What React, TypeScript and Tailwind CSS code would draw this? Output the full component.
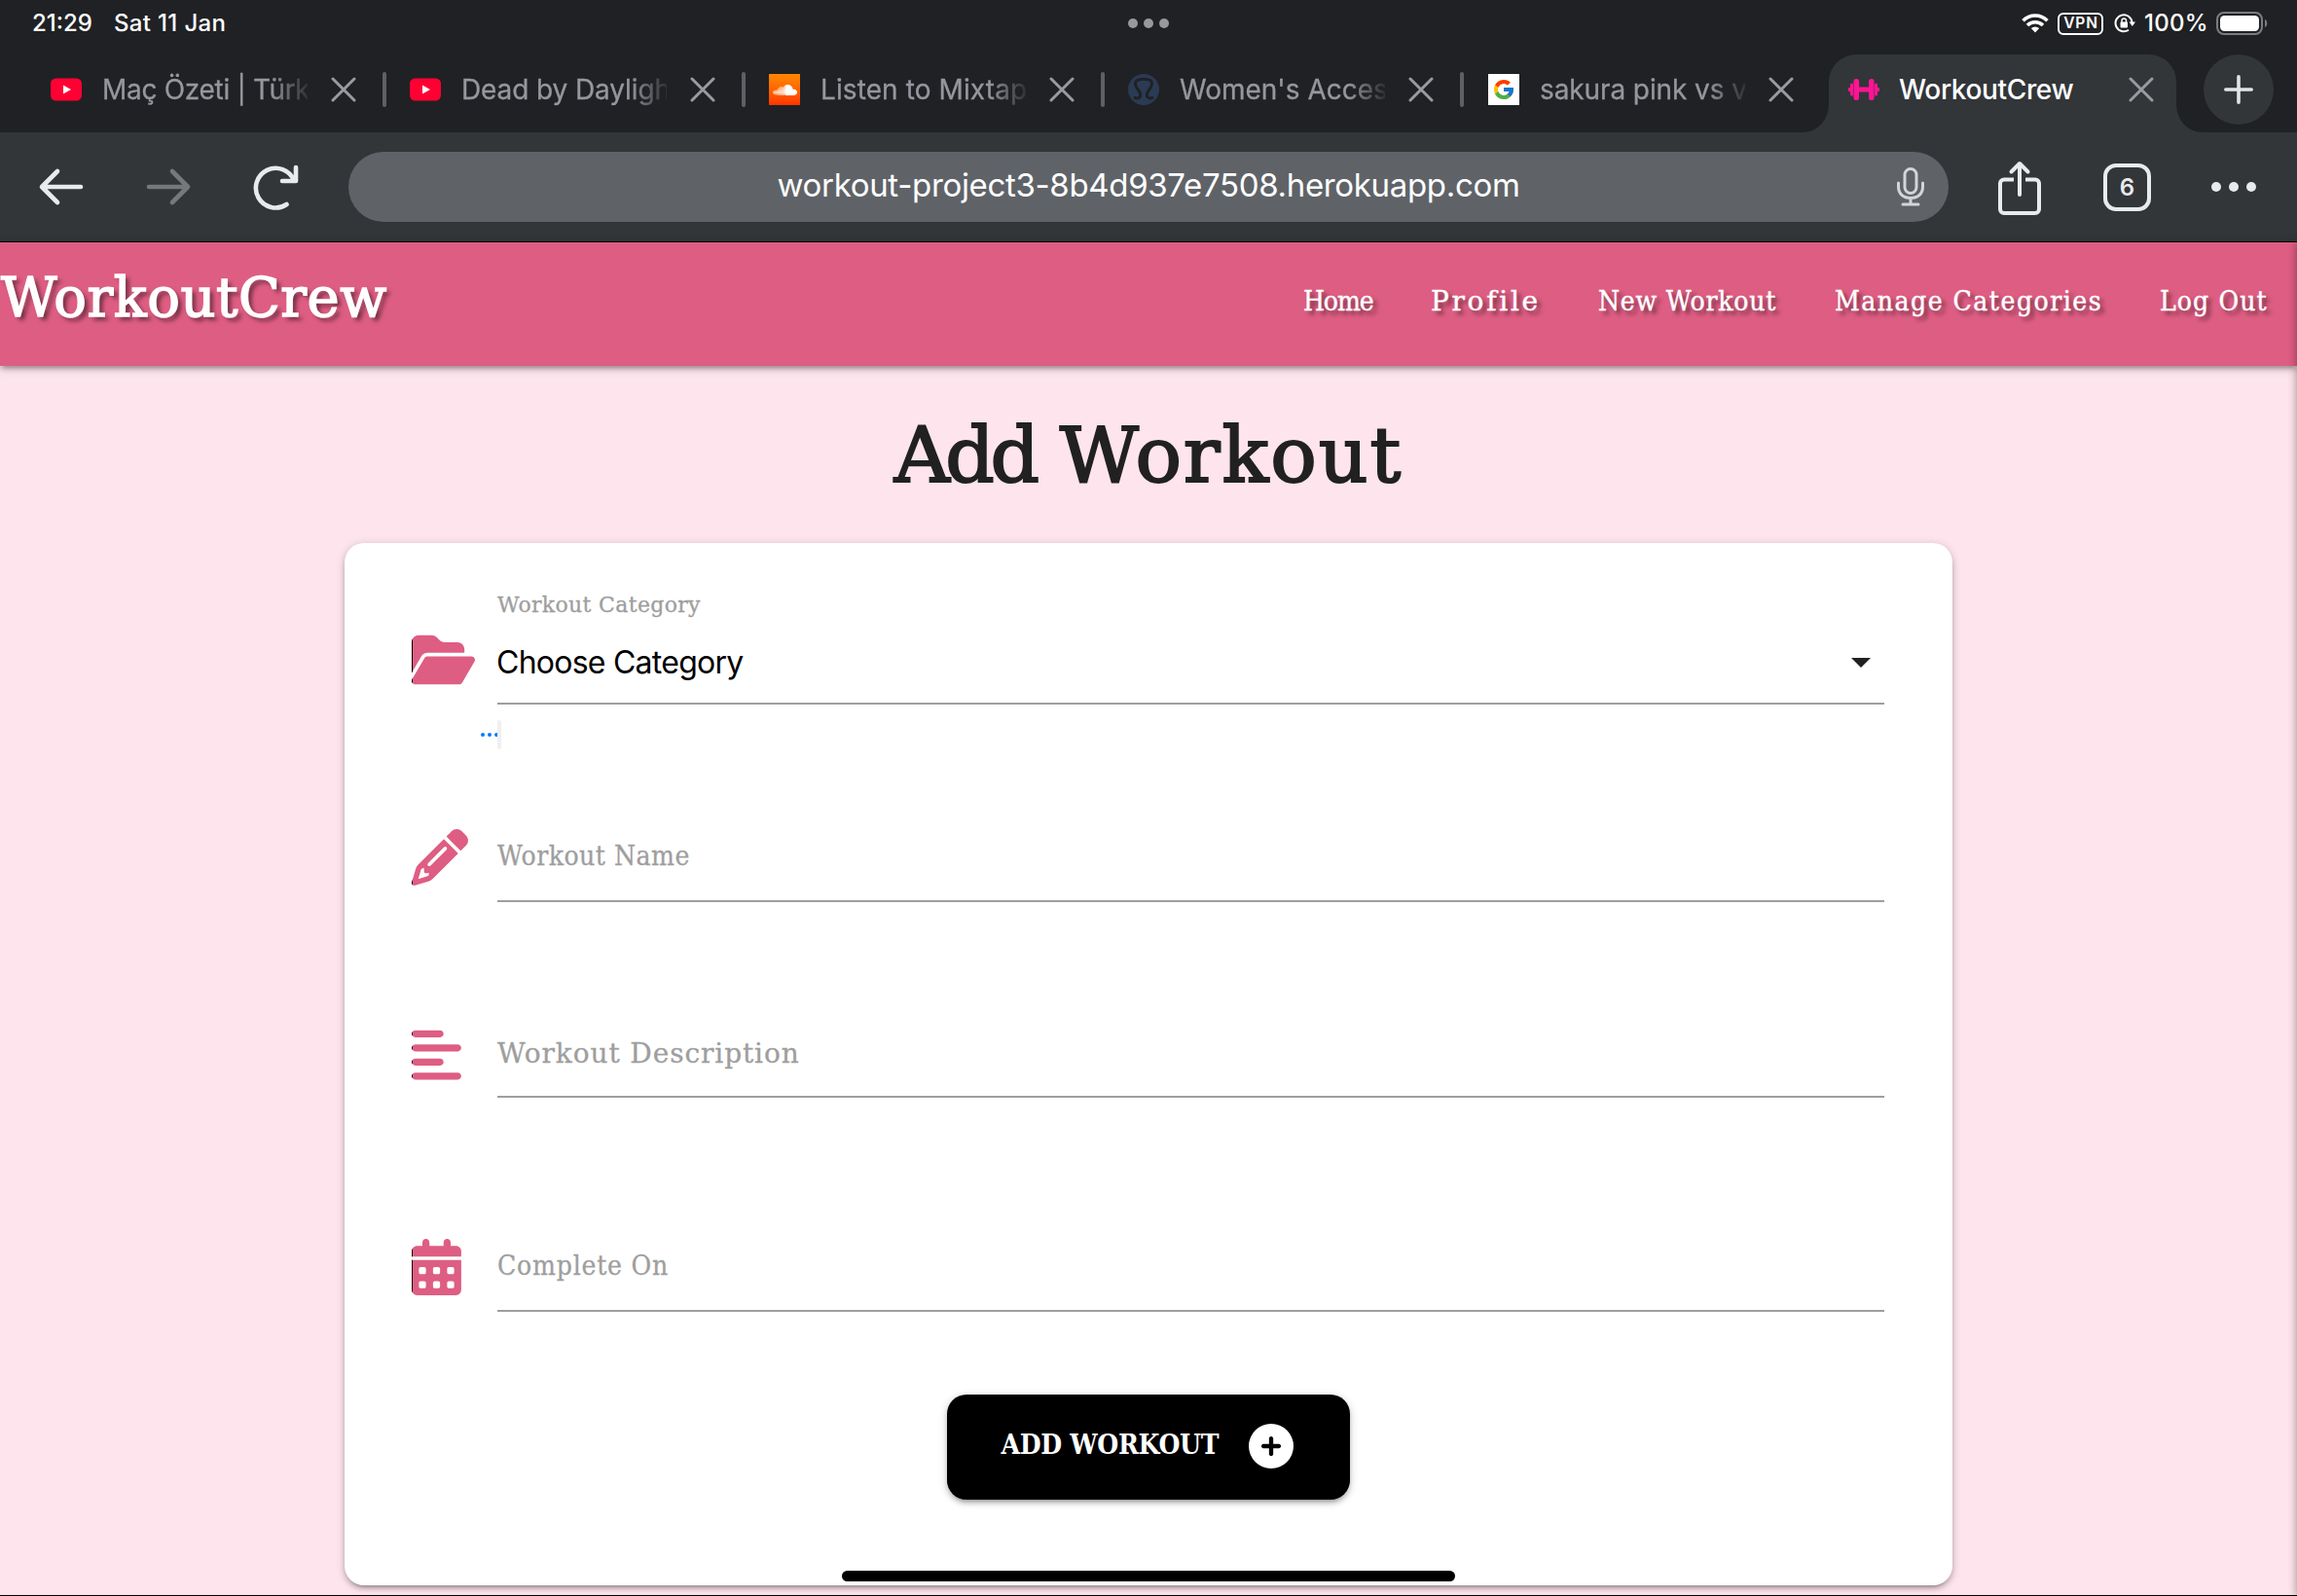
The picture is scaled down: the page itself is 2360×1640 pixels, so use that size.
import React from "react";
import { FaFolderOpen, FaPencil, FaAlignLeft, FaCalendarDays, FaCirclePlus } from "react-icons/fa6";
import { FaSoundcloud } from "react-icons/fa";
import { FcGoogle } from "react-icons/fc";

const UI = "font-['Inter','Liberation_Sans',sans-serif]";
const TYPE = "font-['DejaVu_Serif',serif]";
const NARROW = "font-['DejaVu_Serif_Condensed','DejaVu_Serif',serif]";

function YouTube() {
  return (
    <svg className="h-8 w-8" viewBox="0 0 32 32">
      <rect x="0" y="4.5" width="32" height="23" rx="5.5" fill="#ff0033" />
      <path d="M13 11.5v9l8-4.500z" fill="#fff" />
    </svg>
  );
}

function SoundCloud() {
  return (
    <div className="flex h-8 w-8 items-center justify-center bg-linear-to-b from-[#ff8800] to-[#ff3300] text-white">
      <FaSoundcloud className="h-[25px] w-[25px]" />
    </div>
  );
}

function Omega() {
  return (
    <svg className="h-8 w-8" viewBox="0 0 32 32" fill="none">
      <circle cx="16" cy="16" r="16" fill="#2b3b55" />
      <path d="M7 24.500c4 1.300 6.500-.8 5.500-4.500-1-3.300-5-5.500-5-10C7.500 6.500 11 5.200 16 5.200s8.500 1.300 8.500 4.800c0 4.500-4 6.700-5 10-1 3.700 1.500 5.800 5.500 4.500" stroke="#202124" strokeWidth="3" strokeLinecap="round" />
    </svg>
  );
}

function Google() {
  return (
    <div className="flex h-8 w-8 items-center justify-center bg-white">
      <FcGoogle className="h-6 w-6" />
    </div>
  );
}

function Dumbbell() {
  return (
    <svg className="h-8 w-8 shrink-0" viewBox="0 0 32 32" fill="#ff1493">
      <rect x="5.500" y="5" width="5.500" height="22" rx="2.500" />
      <rect x="21" y="5" width="5.500" height="22" rx="2.500" />
      <rect x="2" y="9.500" width="3" height="13" rx="1.500" />
      <rect x="27" y="9.500" width="3" height="13" rx="1.500" />
      <rect x="0" y="14" width="3" height="4" rx="1" />
      <rect x="29" y="14" width="3" height="4" rx="1" />
      <rect x="9" y="13.500" width="14" height="5" />
    </svg>
  );
}

function Cross() {
  return (
    <svg className="h-[26px] w-[26px] shrink-0" viewBox="0 0 26 26" stroke="#9a9ba2" strokeWidth="3" strokeLinecap="round">
      <path d="M2 2l22 22M24 2L2 24" />
    </svg>
  );
}

const tabs = [
  { icon: <YouTube />, title: "Maç Özeti | Türk", spacing: "tracking-[-0.3px]" },
  { icon: <YouTube />, title: "Dead by Dayligh", spacing: "tracking-[-0.1px]" },
  { icon: <SoundCloud />, title: "Listen to Mixtap", spacing: "tracking-[0.1px]" },
  { icon: <Omega />, title: "Women's Acces", spacing: "tracking-[0px]" },
  { icon: <Google />, title: "sakura pink vs v", spacing: "tracking-[-0.1px]" },
];

function StatusBar() {
  return (
    <div className="grid h-14 grid-cols-3 items-start px-[33px] pt-2 text-[24px] leading-8 font-medium text-white">
      <div className="flex gap-[22px]">
        <span className="tracking-[0px]">21:29</span>
        <span className="tracking-[0.35px]">Sat 11 Jan</span>
      </div>
      <div className="flex h-8 items-center justify-center gap-[6px]">
        <i className="h-[10px] w-[10px] rounded-full bg-[#98989d]" />
        <i className="h-[10px] w-[10px] rounded-full bg-[#98989d]" />
        <i className="h-[10px] w-[10px] rounded-full bg-[#98989d]" />
      </div>
      <div className="-mr-[3px] flex h-8 items-center justify-end">
        <svg className="h-5 w-7" viewBox="0 0 28 20" fill="none" stroke="#fff" strokeWidth="3.600">
          <path d="M1.500 7.200a17.500 17.500 0 0 1 25 0" />
          <path d="M6 12a11.500 11.500 0 0 1 16 0" />
          <path d="M14 19.500l-4.200-4.400a6 6 0 0 1 8.400 0z" fill="#fff" stroke="none" />
        </svg>
        <span className="ml-[9px] flex h-[23px] w-[47px] items-center justify-center rounded-[6px] border-2 border-white pl-px text-[15.500px] font-semibold tracking-[0.8px]">VPN</span>
        <svg className="ml-[11px] h-[22px] w-[22px]" viewBox="0 0 22 22" fill="none" stroke="#fff" strokeWidth="2">
          <path d="M15 17.700A8.500 8.500 0 1 1 18.500 10" />
          <path d="M15.500 9.500h6.500l-3.200 4.500z" fill="#fff" stroke="none" />
          <rect x="6.500" y="9.500" width="7.500" height="6" rx="1" fill="#fff" stroke="none" />
          <path d="M8 10V8.200a2.200 2.200 0 0 1 4.500 0V10" strokeWidth="1.500" />
        </svg>
        <span className="ml-[9px] tracking-[0.3px]">100%</span>
        <svg className="ml-[8px] h-6 w-[53px]" viewBox="0 0 53 24">
          <rect x="1" y="1" width="46" height="22" rx="7" fill="none" stroke="#7b7c7f" strokeWidth="2" />
          <rect x="4" y="4" width="40" height="16" rx="4.500" fill="#fff" />
          <path d="M50 8c3 1 3 7 0 8z" fill="#7b7c7f" />
        </svg>
      </div>
    </div>
  );
}

function TabStrip() {
  return (
    <div className="flex h-20 pl-[27px] text-[28px]">
      {tabs.map((t, i) => (
        <div key={i} className={i === 4 ? "flex h-[72px] w-[348px] items-center pl-[26px]" : "flex h-[72px] w-[369px] items-center pl-[25px]"}>
          <div className="shrink-0">{t.icon}</div>
          <div className={`ml-[21px] w-[211px] mask-[linear-gradient(to_right,black_82%,transparent_103%)] whitespace-nowrap text-[#96979e] [-webkit-text-stroke:0.3px_currentColor] ${t.spacing}`}>{t.title}</div>
          <div className="ml-[24px]"><Cross /></div>
          {i < 4 && <i className="ml-[27px] h-9 w-[4px] shrink-0 rounded-full bg-[#5f6065]" />}
        </div>
      ))}
      <svg className="h-20 w-7 shrink-0" viewBox="0 0 28 80">
        <path d="M28 50c0 17-11 30-28 30h28z" fill="#323639" />
      </svg>
      <div className="flex h-20 w-[357px] shrink-0 items-center rounded-t-[28px] bg-[#323639] pb-2 pl-5 text-white">
        <Dumbbell />
        <span className="ml-5 w-[236px] font-medium tracking-[-0.35px]">WorkoutCrew</span>
        <Cross />
      </div>
      <svg className="h-20 w-7 shrink-0" viewBox="0 0 28 80">
        <path d="M0 50c0 17 11 30 28 30H0z" fill="#323639" />
      </svg>
      <div className="flex h-[72px] w-[72px] shrink-0 items-center justify-center rounded-full bg-[#323639]">
        <svg className="h-[30px] w-[30px]" viewBox="0 0 30 30" stroke="#e1e3e6" strokeWidth="3.600" strokeLinecap="round">
          <path d="M15 1.800v26.400M1.800 15h26.400" />
        </svg>
      </div>
    </div>
  );
}

function Toolbar() {
  return (
    <div className="flex h-28 items-center bg-[#323639] pl-[39px]">
      <svg className="h-12 w-12" viewBox="0 0 48 48" fill="none" stroke="#e8eaed" strokeWidth="4.600" strokeLinecap="round" strokeLinejoin="round">
        <path d="M44 24H5M20 8L4 24l16 16" />
      </svg>
      <svg className="ml-[62px] h-12 w-12" viewBox="0 0 48 48" fill="none" stroke="#76787a" strokeWidth="4.600" strokeLinecap="round" strokeLinejoin="round">
        <path d="M4 24h39M28 8l16 16-16 16" />
      </svg>
      <svg className="ml-[62px] h-12 w-12" viewBox="0 0 48 48" fill="none" stroke="#e8eaed" strokeWidth="4.600" strokeLinecap="round" strokeLinejoin="round">
        <path d="M35.500 42A20.300 20.300 0 1 1 43 17.500M45 4v14H31" />
      </svg>
      <div className="ml-[51px] flex h-[72px] w-[1644px] items-center rounded-full bg-[#5f6368] pr-[25px] pl-[53px]">
        <div className="flex-1 pb-[3px] text-center text-[33px] tracking-[-0.33px] text-white">workout-project3-8b4d937e7508.herokuapp.com</div>
        <svg className="h-10 w-[28px]" viewBox="0 0 28 40" fill="none" stroke="#d3d5d8" strokeWidth="3" strokeLinecap="round">
          <rect x="8" y="1.500" width="12" height="25" rx="6" />
          <path d="M1.500 16v4c0 7 5 11.500 12.500 11.500S26.500 27 26.500 20v-4M14 32v6M6 38h16" />
        </svg>
      </div>
      <svg className="mt-[2px] ml-[50px] h-14 w-[46px]" viewBox="0 0 46 56" fill="none" stroke="#e8eaed" strokeWidth="4" strokeLinecap="round" strokeLinejoin="round">
        <path d="M17 19.500H7a4 4 0 0 0-4 4V50a4 4 0 0 0 4 4h32a4 4 0 0 0 4-4V23.500a4 4 0 0 0-4-4H29" strokeLinecap="butt" />
        <path d="M23 35V4M14.500 11.500L23 3l8.500 8.500" />
      </svg>
      <div className="ml-[63px] flex h-[49px] w-[49px] items-center justify-center rounded-[13px] border-4 border-[#e8eaed] pt-px text-[24px] font-semibold text-[#e8eaed]">6</div>
      <div className="ml-[62px] flex gap-2">
        <i className="h-[10px] w-[10px] rounded-full bg-[#e8eaed]" />
        <i className="h-[10px] w-[10px] rounded-full bg-[#e8eaed]" />
        <i className="h-[10px] w-[10px] rounded-full bg-[#e8eaed]" />
      </div>
    </div>
  );
}

function Nav() {
  return (
    <nav className={`relative flex h-32 items-center justify-between border-t border-black bg-[#de5d83] text-white shadow-[0_4px_4px_rgba(0,0,0,0.14),0_6px_2px_-4px_rgba(0,0,0,0.12),0_2px_10px_rgba(0,0,0,0.2)] ${TYPE}`}>
      <div className="-mt-[14px] pl-px text-[56px] tracking-[0.5px] text-shadow-[4px_4px_4px_rgba(0,0,0,0.5)] [-webkit-text-stroke:1.5px_currentColor]">WorkoutCrew</div>
      <div className={`-mt-[6px] flex gap-[60px] pr-[30px] text-[28px] whitespace-nowrap text-shadow-[4px_4px_4px_rgba(0,0,0,0.5)] [-webkit-text-stroke:0.4px_currentColor] ${NARROW}`}>
        <span className="w-[71px] tracking-[-1.1px]">Home</span>
        <span className={`w-[112px] tracking-[2.700px] ${TYPE}`}>Profile</span>
        <span className="w-[183px] tracking-[0.8px]">New Workout</span>
        <span className="w-[274px] tracking-[1.500px]">Manage Categories</span>
        <span className="w-[111px] tracking-[1.100px]">Log Out</span>
      </div>
    </nav>
  );
}

/* Pink glyph with a hairline dark left edge. */
function EdgeIcon({ children }: { children: React.ReactNode }) {
  return (
    <div className="relative w-[88px] shrink-0 text-[#de5d83]">
      {children}
      <div aria-hidden="true" className="absolute top-0 left-0 w-px overflow-hidden text-black [&>svg]:max-w-none">{children}</div>
    </div>
  );
}

function Field({ icon, label, text, className }: { icon: React.ReactNode; label: string; text: string; className: string }) {
  return (
    <div className={`flex ${className}`}>
      <EdgeIcon>{icon}</EdgeIcon>
      <div className={`h-[75px] flex-1 border-b-2 border-[#9e9e9e] text-[28px] leading-10 text-[#9e9e9e] [-webkit-text-stroke:0.3px_currentColor] ${text}`}>{label}</div>
    </div>
  );
}

export default function App() {
  return (
    <div className={`flex h-[1640px] w-[2360px] flex-col overflow-hidden border-b border-black bg-[#202124] ${UI}`}>
      <StatusBar />
      <TabStrip />
      <Toolbar />
      <div className="relative flex flex-1 flex-col bg-[#fee4ec]">
        <Nav />
        <h1 className={`mt-[42px] text-center text-[79px] leading-[100px] text-[#212121] [-webkit-text-stroke:2px_currentColor] ${TYPE}`}>
          <span className="tracking-[-4.500px]">Add</span> <span className="tracking-[1.900px]">Workout</span>
        </h1>
        <section className="mx-auto mt-[40px] h-[1071px] w-[1652px] shrink-0 rounded-[20px] bg-white pr-[70px] pl-[69px] shadow-[0_4px_4px_rgba(0,0,0,0.14),0_6px_2px_-4px_rgba(0,0,0,0.12),0_2px_10px_rgba(0,0,0,0.2)]">
          <div className="flex h-[166px] pt-[46px]">
            <div className="mt-[45px]"><EdgeIcon><FaFolderOpen className="h-[58px] w-[65px]" /></EdgeIcon></div>
            <div className="flex h-[120px] flex-1 flex-col border-b-2 border-[#9e9e9e]">
              <span className={`text-[22px] leading-9 tracking-[0.33px] text-[#9e9e9e] [-webkit-text-stroke:0.3px_currentColor] ${TYPE}`}>Workout Category</span>
              <div className="mt-[17px] flex h-12 items-center justify-between pr-[12px] pb-px text-[32px] text-black">
                <span className="-ml-px tracking-[-0.75px]">Choose Category</span>
                <svg className="h-[12px] w-[24px]" viewBox="0 0 24 12"><path d="M2 1h20L12 11z" fill="#212121" /></svg>
              </div>
            </div>
          </div>
          <div className="mt-4 ml-[71px] flex h-[30px] items-center">
            <div className="flex w-[17px] gap-[3px] overflow-hidden">
              <i className="h-1 w-1 shrink-0 rounded-full bg-[#007aff]" />
              <i className="h-1 w-1 shrink-0 rounded-full bg-[#007aff]" />
              <i className="h-1 w-1 shrink-0 rounded-full bg-[#007aff]" />
            </div>
            <i className="h-[30px] w-1 rounded-sm bg-[#efefef]" />
          </div>
          <Field className="mt-[82px]" icon={<FaPencil className="h-[58px] w-[58px]" />} label="Workout Name" text={`pt-[8px] tracking-[0.5px] ${NARROW}`} />
          <Field className="mt-[126px]" icon={<FaAlignLeft className="mt-[2px] h-[58px] w-[51px]" />} label="Workout Description" text={`pt-[10px] tracking-[0.9px] ${TYPE}`} />
          <Field className="mt-[145px]" icon={<FaCalendarDays className="h-[58px] w-[51px]" />} label="Complete On" text={`pt-[8px] tracking-[0.8px] ${NARROW}`} />
          <button className={`mx-auto mt-[85px] flex h-[108px] w-[414px] items-center rounded-[20px] bg-black pb-[2px] pl-14 text-[28px] font-bold text-white shadow-[0_4px_4px_rgba(0,0,0,0.14),0_6px_2px_-4px_rgba(0,0,0,0.12),0_2px_10px_rgba(0,0,0,0.2)] ${NARROW}`}>
            <span className="w-[254px] pb-[3px] text-left tracking-[-0.3px] whitespace-nowrap">ADD WORKOUT</span>
            <FaCirclePlus className="h-[46px] w-[46px]" />
          </button>
        </section>
        <div className="absolute top-0 -right-5 h-full w-5 shadow-[0_2px_10px_rgba(0,0,0,0.4)]" />
        <div className="absolute bottom-[14px] left-1/2 h-[11px] w-[630px] -translate-x-1/2 rounded-full bg-black" />
      </div>
    </div>
  );
}
